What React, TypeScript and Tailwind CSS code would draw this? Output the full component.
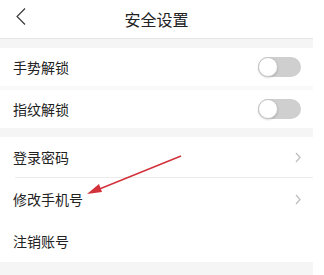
const Toggle = () => (
  <div className="relative h-[20px] w-[43px] rounded-full bg-[#cfcfcf]">
    <div className="absolute left-0 top-0 h-[20px] w-[20px] rounded-full border border-[#c4c4c4] bg-white shadow-[0_1px_2px_rgba(0,0,0,0.15)]" />
  </div>
);

const Chevron = () => (
  <svg width="6" height="11" viewBox="0 0 6 11" fill="none">
    <path d="M1 1l4 4.5-4 4.5" stroke="#c2c2c2" strokeWidth="1.4" />
  </svg>
);

const Row = ({ label, right, h }: { label: string; right?: React.ReactNode; h: string }) => (
  <div className={`flex items-center justify-between bg-white pl-[13px] pr-[12px] ${h}`}>
    <span className="text-[14px] text-[#222]">{label}</span>
    {right}
  </div>
);

export default function App() {
  return (
    <div className="relative h-[275px] w-[324px] overflow-hidden bg-white font-['Noto_Sans_CJK_SC',sans-serif]">
      <div className="flex h-full w-[313px] flex-col bg-[#f5f5f5]">
        <header className="relative flex h-[39px] shrink-0 items-center justify-center border-b border-[#e6e6e6] bg-white">
          <svg className="absolute left-[16px] top-[8px]" width="10" height="17" viewBox="0 0 10 17" fill="none">
            <path d="M9 0.5L1 8.5l8 8" stroke="#333" strokeWidth="1.1" />
          </svg>
          <h1 className="text-[16px] text-[#222]">安全设置</h1>
        </header>
        <div className="mt-[9px]">
          <Row label="手势解锁" h="h-[38px]" right={<Toggle />} />
        </div>
        <div className="h-[4px] bg-[#f9f9f9]" />
        <Row label="指纹解锁" h="h-[38px]" right={<Toggle />} />
        <div className="mt-[9px] flex flex-col">
          <Row label="登录密码" h="h-[40px]" right={<Chevron />} />
          <div className="bg-white pl-[15px]">
            <div className="h-px bg-[#ececec]" />
          </div>
          <Row label="修改手机号" h="h-[42px]" right={<Chevron />} />
          <Row label="注销账号" h="h-[42px]" />
        </div>
      </div>
      <svg className="absolute left-0 top-0" width="324" height="275" viewBox="0 0 324 275">
        <line x1="181" y1="156" x2="97" y2="190" stroke="#d3313a" strokeWidth="1.4" />
        <polygon points="87,194 99,184 102,192" fill="#d3313a" />
      </svg>
    </div>
  );
}
